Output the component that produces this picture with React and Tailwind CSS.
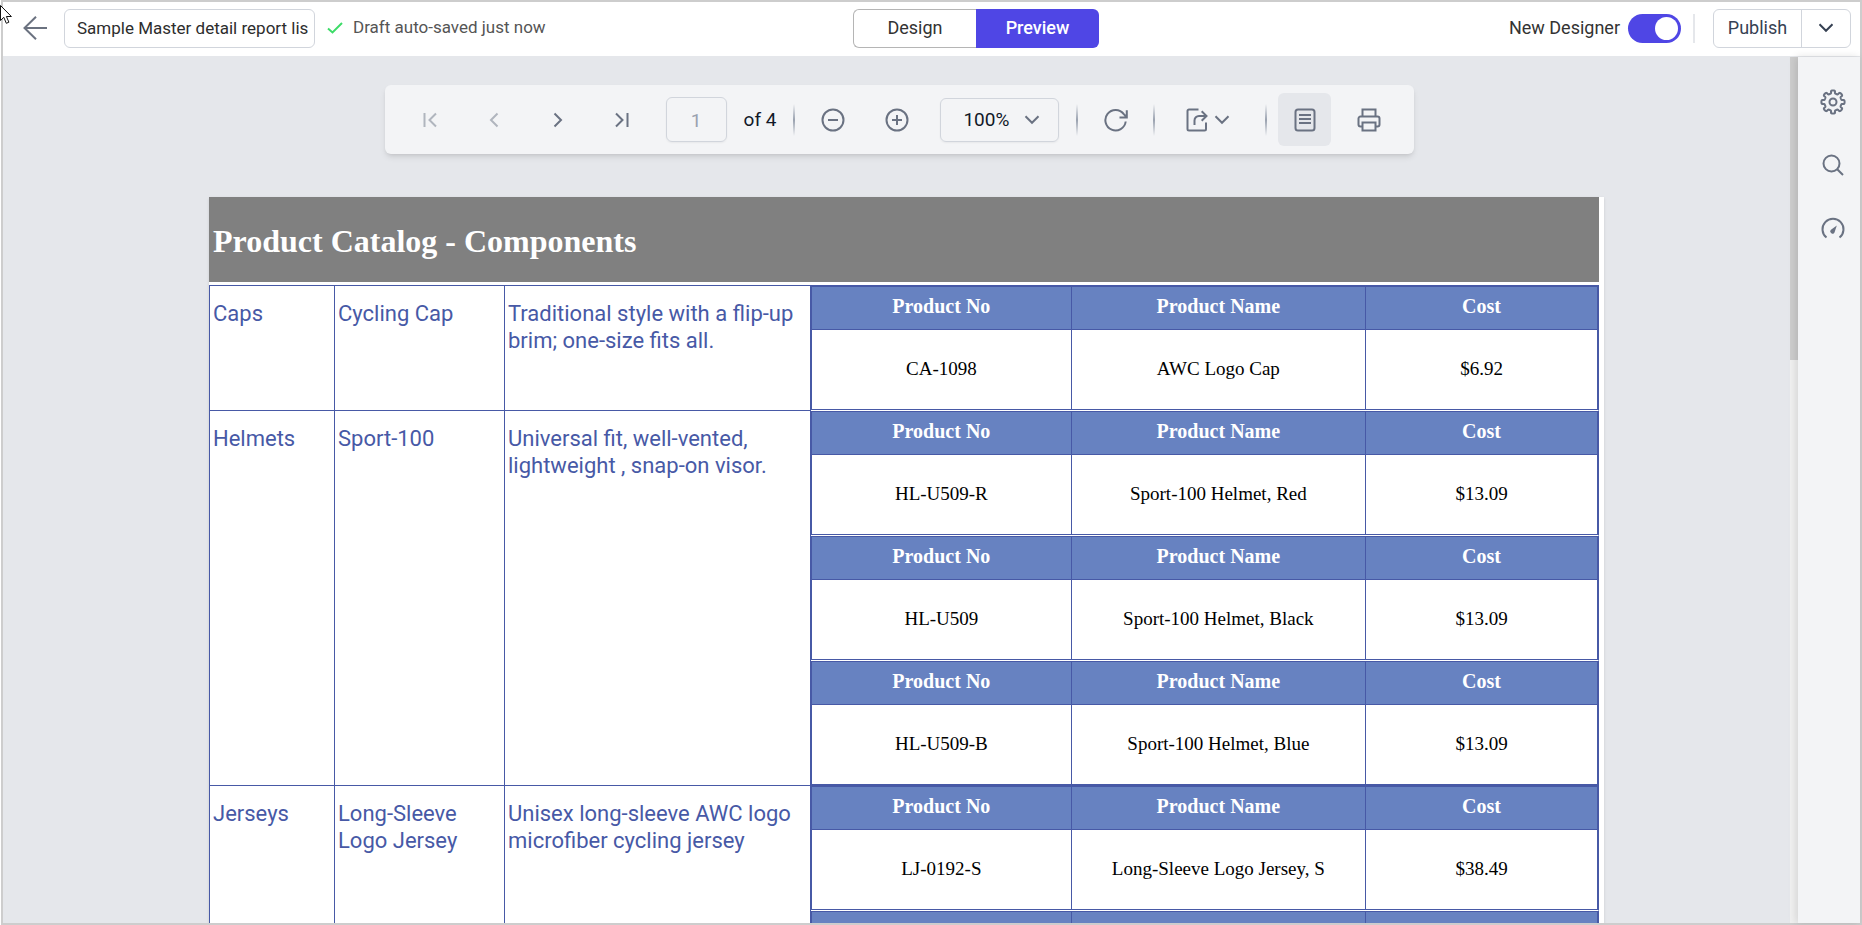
import React from "react";

const gearPath = (() => {
  const points = [];
  for (let i = 0; i < 240; i++) {
    const t = (i / 240) * Math.PI * 2;
    const a = t + 0.05 * Math.sin(16 * t);
    const r = 10.1 + 1.5 * (Math.tanh(1.3 * Math.cos(8 * t)) / Math.tanh(1.3));
    points.push(`${(13 + r * Math.sin(a)).toFixed(2)} ${(13 - r * Math.cos(a)).toFixed(2)}`);
  }
  return `M${points.join("L")}Z`;
})();

function Icon({ w = 24, h = 24, stroke = 2, className = "", children }) {
  return (
    <svg
      width={w}
      height={h}
      viewBox={`0 0 ${w} ${h}`}
      fill="none"
      stroke="currentColor"
      strokeWidth={stroke}
      className={`block shrink-0 ${className}`}
      aria-hidden="true"
    >
      {children}
    </svg>
  );
}

function ChevronDown({ className }) {
  return (
    <Icon w={16} h={10} className={className}>
      <path d="M1.500 1.200 8 7.800l6.500-6.600" />
    </Icon>
  );
}

function ToolButton({ label, active, disabled, children }) {
  return (
    <button
      type="button"
      aria-label={label}
      aria-pressed={active}
      disabled={disabled}
      className={`flex h-[53px] w-[53px] shrink-0 items-center justify-center rounded-md ${
        active ? "bg-gray-200" : ""
      } ${disabled ? "text-[#b0b5be]" : "text-gray-500"}`}
    >
      {children}
    </button>
  );
}

function Divider({ className = "" }) {
  return (
    <div
      className={`h-8 w-0.5 shrink-0 bg-linear-to-b from-transparent via-gray-400 to-transparent ${className}`}
    />
  );
}

function Header() {
  return (
    <header className="grid h-[55px] shrink-0 grid-cols-[1fr_auto_1fr] items-center border-b border-gray-200 bg-white pb-0.5">
      <div className="flex items-center pl-5 text-[#6b7280]">
        <button type="button" aria-label="Back">
          <Icon w={24} h={24} stroke={2}>
            <path d="M24 12H1.500M13 .8 1.500 12 13 23.200" />
          </Icon>
        </button>
        <input
          type="text"
          aria-label="Report name"
          defaultValue="Sample Master detail report list"
          className="ml-[17px] h-[39px] w-[251px] rounded-md border border-gray-300 bg-white pr-1.5 pl-3 text-[17px] text-[#2d2d2d] outline-none"
        />
        <Icon w={16} h={12} className="ml-3 text-[#3ddc68]">
          <path d="m1 6.500 4.500 4L15 1" />
        </Icon>
        <span className="ml-2.5 text-[17px] whitespace-nowrap text-[#555]">Draft auto-saved just now</span>
      </div>

      <div className="ml-[89px] flex h-[39px] text-lg">
        <button
          type="button"
          className="w-[123px] rounded-l-md border border-r-0 border-[#b5b5b5] bg-white text-[#333]"
        >
          Design
        </button>
        <button type="button" className="w-[123px] rounded-r-md bg-[#4f46e5] font-medium text-white">
          Preview
        </button>
      </div>

      <div className="flex items-center justify-end pr-[9px] text-lg">
        <label htmlFor="new-designer" className="whitespace-nowrap text-[#333]">
          New Designer
        </label>
        <input
          id="new-designer"
          type="checkbox"
          role="switch"
          defaultChecked
          className="ml-2 flex h-[29px] w-[53px] appearance-none items-center justify-end rounded-full bg-[#4f46e5] px-[3px] before:size-[23px] before:rounded-full before:bg-white"
        />
        <div className="ml-3 h-[29px] w-0.5 bg-gray-200" />
        <div className="ml-[18px] flex h-[39px] overflow-hidden rounded-md border border-gray-300 bg-white text-gray-700">
          <button type="button" className="w-[88px] border-r border-gray-300">
            Publish
          </button>
          <button type="button" aria-label="More publish options" className="flex w-12 items-center justify-center">
            <ChevronDown />
          </button>
        </div>
      </div>
    </header>
  );
}

function Toolbar() {
  return (
    <div
      role="toolbar"
      aria-label="Report viewer"
      className="flex items-center gap-[11px] rounded-md bg-gray-100 px-[19px] py-2 font-[Roboto,sans-serif] text-[19px] text-gray-900 shadow-md"
    >
      <ToolButton label="First page" disabled>
        <Icon w={14} h={16}>
          <path d="M1.500 1v14M13 1.500 6.500 8l6.500 6.500" />
        </Icon>
      </ToolButton>
      <ToolButton label="Previous page" disabled>
        <Icon w={10} h={16}>
          <path d="M8.500 1.500 2 8l6.500 6.500" />
        </Icon>
      </ToolButton>
      <ToolButton label="Next page">
        <Icon w={10} h={16}>
          <path d="M1.500 1.500 8 8l-6.500 6.500" />
        </Icon>
      </ToolButton>
      <ToolButton label="Last page">
        <Icon w={14} h={16}>
          <path d="M1 1.500 7.500 8 1 14.500M12.500 1v14" />
        </Icon>
      </ToolButton>
      <input
        type="text"
        aria-label="Page number"
        defaultValue="1"
        className="ml-1.5 h-[45px] w-[61px] rounded-md border border-gray-300 bg-transparent pt-0.5 text-center text-gray-400 shadow-xs outline-none"
      />
      <span className="ml-1.5 pt-0.5 whitespace-nowrap">of 4</span>
      <Divider className="ml-1.5" />
      <ToolButton label="Zoom out">
        <Icon>
          <circle cx="12" cy="12" r="10.500" />
          <path d="M7 12h10" />
        </Icon>
      </ToolButton>
      <ToolButton label="Zoom in">
        <Icon>
          <circle cx="12" cy="12" r="10.500" />
          <path d="M7 12h10M12 7v10" />
        </Icon>
      </ToolButton>
      <div className="ml-1.5 grid h-11 w-[119px] items-center rounded-md border border-gray-300 shadow-xs">
        <select
          aria-label="Zoom level"
          defaultValue="100%"
          className="col-start-1 row-start-1 h-full w-full appearance-none bg-transparent pt-0.5 pl-[22px] outline-none"
        >
          <option>50%</option>
          <option>100%</option>
          <option>200%</option>
        </select>
        <ChevronDown className="pointer-events-none col-start-1 row-start-1 mr-[18px] justify-self-end text-gray-500" />
      </div>
      <Divider className="ml-1.5" />
      <ToolButton label="Refresh">
        <Icon>
          <path d="M21.700 13.500A10.200 10.200 0 1 1 19.800 6.200L22.500 9M22.800 2.200v7.300h-7.300" />
        </Icon>
      </ToolButton>
      <Divider />
      <button
        type="button"
        aria-label="Export"
        className="flex h-[53px] w-[88px] shrink-0 items-center justify-center gap-1.5 pr-1 text-gray-500"
      >
        <Icon w={22}>
          <path d="M12.500 1.500H3a1.500 1.500 0 0 0-1.500 1.500v18A1.500 1.500 0 0 0 3 22.500h15.500a1.500 1.500 0 0 0 1.500-1.500v-6.500M8.500 17v-4.500A4.500 4.500 0 0 1 13 8h7.500M15.700 3.200 20.500 8l-4.800 4.800" />
        </Icon>
        <ChevronDown />
      </button>
      <Divider />
      <ToolButton label="Page layout" active>
        <Icon w={22}>
          <rect x="1.500" y="1.500" width="19" height="21" rx="2.500" />
          <path d="M5 7h12M5 11h12M5 15h12" />
        </Icon>
      </ToolButton>
      <ToolButton label="Print">
        <Icon>
          <path d="M5.500 8V1.500h13V8M5.500 18.500H3.500a2 2 0 0 1-2-2v-6a2 2 0 0 1 2-2h17a2 2 0 0 1 2 2v6a2 2 0 0 1-2 2h-2" />
          <path d="M5.500 14.500h13v8h-13z" />
        </Icon>
      </ToolButton>
    </div>
  );
}

const groups = [
  {
    category: "Caps",
    product: "Cycling Cap",
    description: "Traditional style with a flip-up brim; one-size fits all.",
    ruled: true,
    items: [["CA-1098", "AWC Logo Cap", "$6.92"]],
  },
  {
    category: "Helmets",
    product: "Sport-100",
    description: "Universal fit, well-vented, lightweight , snap-on visor.",
    ruled: false,
    items: [
      ["HL-U509-R", "Sport-100 Helmet, Red", "$13.09"],
      ["HL-U509", "Sport-100 Helmet, Black", "$13.09"],
      ["HL-U509-B", "Sport-100 Helmet, Blue", "$13.09"],
    ],
  },
  {
    category: "Jerseys",
    product: "Long-Sleeve Logo Jersey",
    description: "Unisex long-sleeve AWC logo microfiber cycling jersey",
    ruled: true,
    items: [
      ["LJ-0192-S", "Long-Sleeve Logo Jersey, S", "$38.49"],
      ["LJ-0192-M", "Long-Sleeve Logo Jersey, M", "$38.49"],
    ],
  },
];

function ItemTable({ item, ruled }) {
  return (
    <table
      className={`w-full table-fixed border-separate border-spacing-0 border-t border-r border-r-[#4759a6] font-['Liberation_Serif',serif] ${
        ruled ? "border-t-[#4759a6]" : "border-t-white"
      }`}
    >
      <colgroup>
        <col className="w-[33%]" />
        <col className="w-[37.4%]" />
        <col />
      </colgroup>
      <thead>
        <tr className="h-11 bg-[#6782c1] text-xl text-white">
          {["Product No", "Product Name", "Cost"].map((h) => (
            <th key={h} className="border-y border-l border-[#4759a6] p-0 pb-1 font-bold last:border-r">
              {h}
            </th>
          ))}
        </tr>
      </thead>
      <tbody>
        <tr className="h-20 text-[19px] text-black">
          {item.map((v) => (
            <td key={v} className="border-b border-l border-[#4759a6] p-0 pb-0.5 text-center last:border-r">
              {v}
            </td>
          ))}
        </tr>
      </tbody>
    </table>
  );
}

function Report() {
  const cell = "border-t border-l border-[#4759a6] px-[3px] pt-[14px] align-top";
  return (
    <article className="w-full max-w-[1395px] bg-white pr-[5px] shadow-sm">
      <h1 className="flex h-[85px] items-center bg-[#808080] pt-0.5 pl-1 font-['Liberation_Serif',serif] text-[32px] font-bold text-white">
        Product Catalog - Components
      </h1>
      <table className="mt-[3px] w-full table-fixed border-separate border-spacing-0 text-[22px] leading-[27px] text-[#4759a6]">
        <colgroup>
          <col className="w-[125px]" />
          <col className="w-[170px]" />
          <col className="w-[306px]" />
          <col />
        </colgroup>
        <tbody>
          {groups.map((g) => (
            <tr key={g.category}>
              <td className={cell}>{g.category}</td>
              <td className={cell}>{g.product}</td>
              <td className={cell}>{g.description}</td>
              <td className="border-l border-[#4759a6] p-0 align-top">
                {g.items.map((item, i) => (
                  <ItemTable key={item[0]} item={item} ruled={g.ruled && i === 0} />
                ))}
              </td>
            </tr>
          ))}
        </tbody>
      </table>
    </article>
  );
}

function PanelButton({ label, children }) {
  return (
    <button
      type="button"
      aria-label={label}
      className="flex h-[63px] w-full shrink-0 items-center justify-center pb-5 pl-[7px]"
    >
      {children}
    </button>
  );
}

function SidePanel() {
  return (
    <aside className="flex w-[62px] shrink-0 flex-col items-center bg-gray-100 pt-[23px] text-gray-500 shadow-[-2px_0_8px_rgba(0,0,0,0.12)]">
      <PanelButton label="Settings">
        <Icon w={26} h={26}>
          <path d={gearPath} strokeLinejoin="round" />
          <circle cx="13" cy="13" r="3.500" />
        </Icon>
      </PanelButton>
      <PanelButton label="Search">
        <Icon w={22} h={22}>
          <circle cx="9.500" cy="9.500" r="8" />
          <path d="m15.200 15.200 5.800 5.800" />
        </Icon>
      </PanelButton>
      <PanelButton label="Performance">
        <Icon w={24} h={22}>
          <path d="M5.500 20.500A10.500 10.500 0 1 1 18.500 20.500" />
          <path d="M15.800 8.500 10 12.800a2.200 2.200 0 1 0 3.600 2.400z" fill="currentColor" stroke="none" />
        </Icon>
      </PanelButton>
    </aside>
  );
}

export default function App() {
  return (
    <div className="relative h-screen overflow-hidden bg-white pl-px font-[Roboto,sans-serif]">
      <div className="flex h-full flex-col border-2 border-[#cdcdcd]">
        <Header />
        <div className="flex min-h-0 flex-1">
          <main className="min-w-0 flex-1 overflow-hidden bg-gray-200">
            <div className="flex justify-center pt-7 pl-1.5">
              <Toolbar />
            </div>
            <div className="flex justify-center pt-[43px] pl-5">
              <Report />
            </div>
          </main>
          <div className="w-2 shrink-0 bg-[#f0f0f0]">
            <div className="h-[35%] bg-[#cdcdcd]" />
          </div>
          <SidePanel />
        </div>
      </div>
      <svg
        className="pointer-events-none absolute top-[5px] left-0"
        width="13"
        height="20"
        viewBox="0 0 13 20"
        aria-hidden="true"
      >
        <path d="M.5.500v15l3.300-3.200 2.500 6 2.600-1.100-2.500-5.700h5z" fill="#fff" stroke="#111" />
      </svg>
    </div>
  );
}
